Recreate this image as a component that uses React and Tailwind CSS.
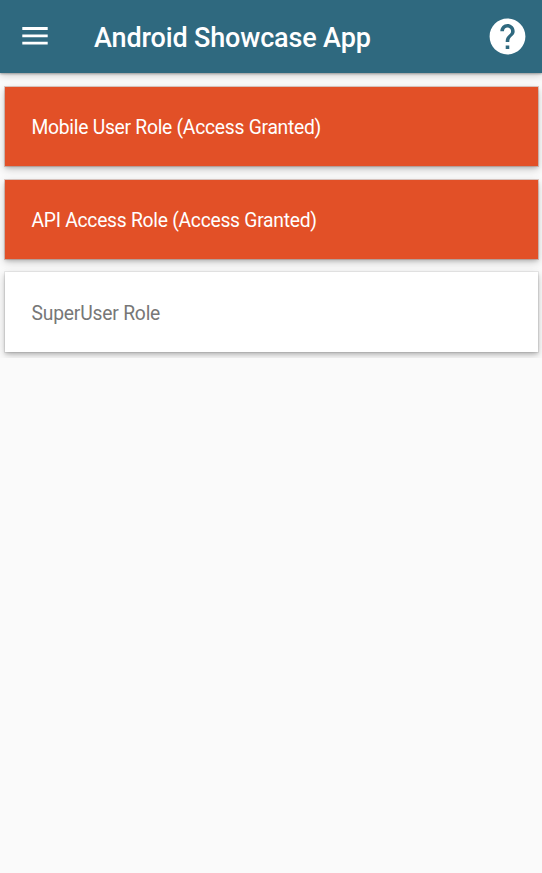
const roles = [
  { name: "Mobile User Role (Access Granted)", granted: true },
  { name: "API Access Role (Access Granted)", granted: true },
  { name: "SuperUser Role", granted: false },
];

export default function App() {
  return (
    <div className="min-h-[873px] bg-[#fafafa] font-['Roboto',sans-serif]">
      <header className="relative flex h-[73px] items-center bg-[#2f697f] text-white shadow-[0_1px_2px_rgba(0,0,0,0.3),0_2px_8px_rgba(0,0,0,0.2)]">
        <svg className="mb-[1px] ml-[22px] h-[18px] w-[26px]" viewBox="0 0 26 18" fill="currentColor">
          <path d="M.3 0h25.4v3H.3zM.3 7.4h25.4v2.8H.3zM.3 14.7h25.4v2.8H.3z" />
        </svg>
        <h1 className="mt-[2px] ml-[46px] grow text-[27px] leading-8 font-medium tracking-[-0.15px] whitespace-nowrap">Android Showcase App</h1>
        <svg className="mr-[13px] mb-[1px] h-[43px] w-[43px]" viewBox="0 0 24 24" fill="currentColor">
          <path d="M12 2C6.48 2 2 6.48 2 12s4.48 10 10 10 10-4.48 10-10S17.52 2 12 2zm1 17h-2v-2h2v2zm2.07-7.75l-.9.92C13.45 12.9 13 13.5 13 15h-2v-.5c0-1.1.45-2.1 1.17-2.83l1.24-1.26c.37-.36.59-.86.59-1.41 0-1.1-.9-2-2-2s-2 .9-2 2H8c0-2.21 1.79-4 4-4s4 1.79 4 4c0 .88-.36 1.68-.93 2.25z" />
        </svg>
      </header>
      <main className="flex flex-col gap-[14px] overflow-hidden pt-[14px] pr-1 pb-[6px] pl-[5px]">
        {roles.map((role) => (
          <div
            key={role.name}
            className={`flex items-center pl-[26.5px] text-[19.3px] ${role.granted ? "h-[79px] bg-[#e25027] pt-[3px] tracking-[-0.27px] text-white shadow-[0_0_0_1px_rgba(160,90,70,0.3),0_2px_3px_rgba(0,0,0,0.12),0_3px_8px_rgba(0,0,0,0.22)]" : "-mt-[1px] h-[80px] bg-white pt-[4px] tracking-[-0.2px] text-[#777777] shadow-[0_0_0_1px_rgba(0,0,0,0.06),0_2px_3px_rgba(0,0,0,0.12),0_3px_8px_rgba(0,0,0,0.22)]"}`}
          >
            {role.name}
          </div>
        ))}
      </main>
    </div>
  );
}
